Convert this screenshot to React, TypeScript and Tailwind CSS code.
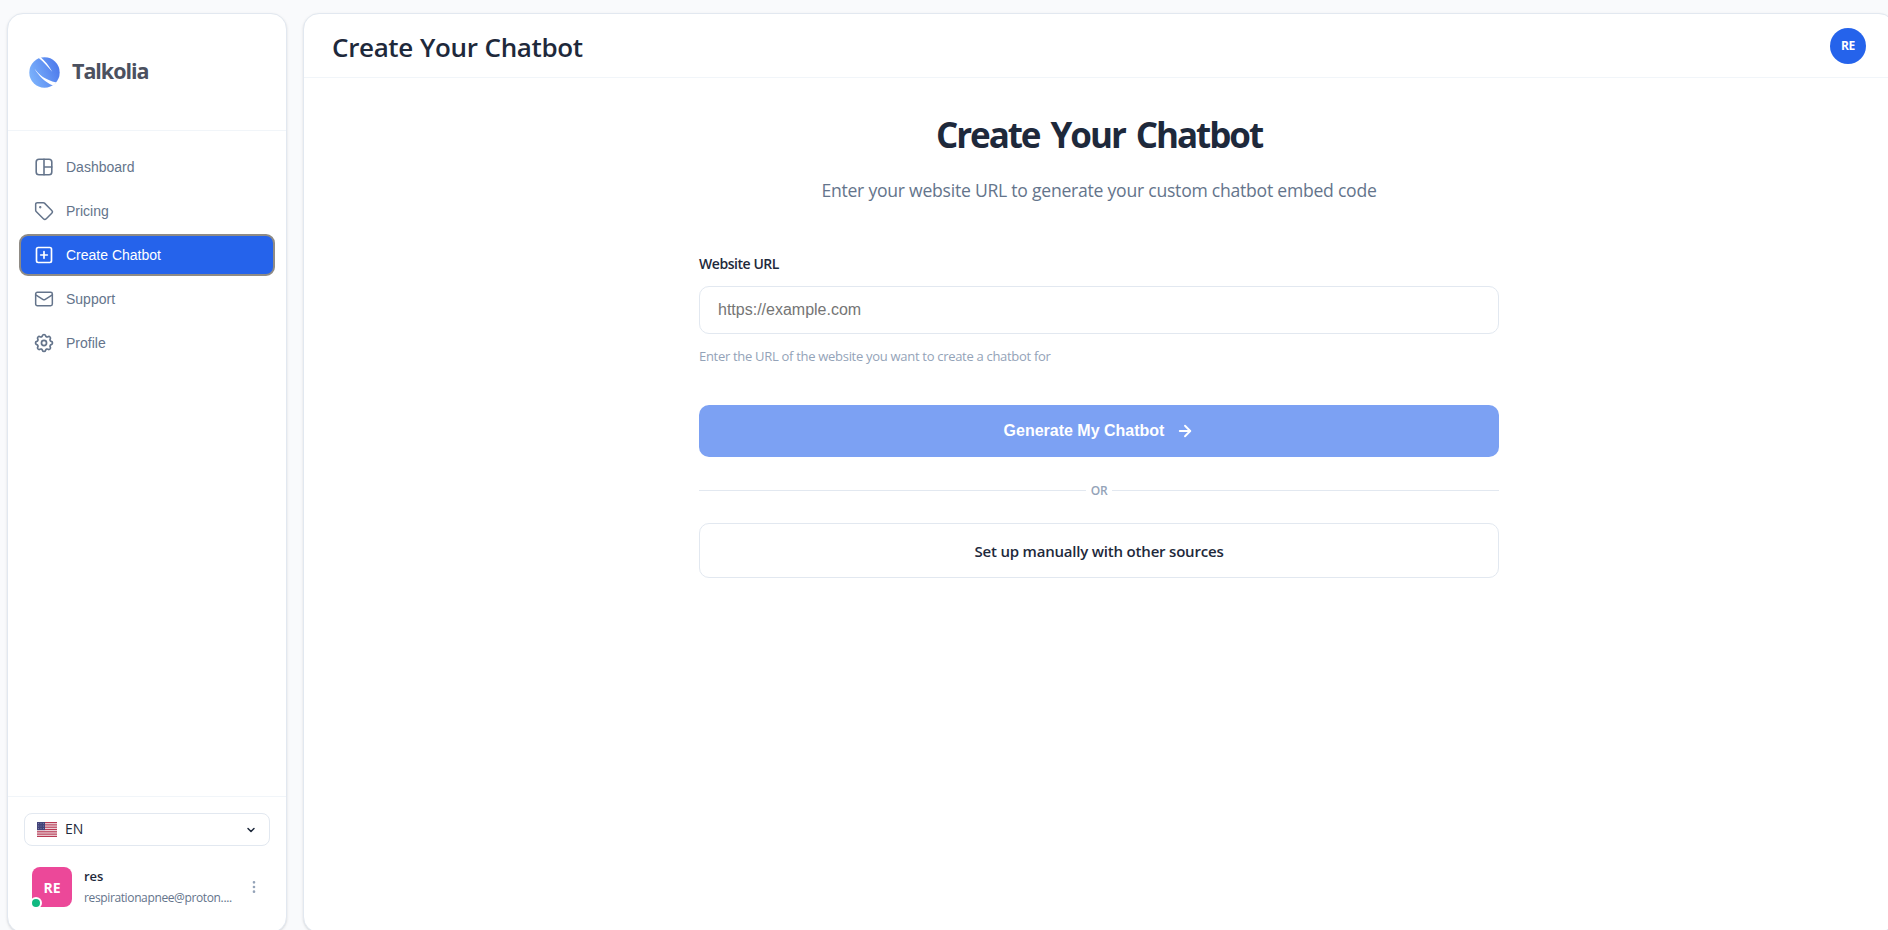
import React from "react";
import { ArrowRight, ChevronDown, EllipsisVertical, Mail, SquarePlus, Tag } from "lucide-react";

const SANS = "font-['Open_Sans','Noto_Sans',sans-serif]";
const ARIAL = "font-['Liberation_Sans',Arial,sans-serif]";

function DashboardIcon() {
  return (
    <svg width="20" height="20" viewBox="0 0 20 20" fill="none" stroke="currentColor" strokeWidth="1.6" strokeLinecap="round" strokeLinejoin="round">
      <rect x="2.2" y="2.2" width="15.6" height="15.6" rx="2.8" />
      <path d="M10 2.2v15.6M10 10h7.8" />
    </svg>
  );
}

function CogIcon() {
  return (
    <svg width="20" height="20" viewBox="1.4 1.4 21.2 21.2" fill="none" stroke="currentColor" strokeWidth="1.8" strokeLinecap="round" strokeLinejoin="round">
      <path d="M10.325 4.317c.426-1.756 2.924-1.756 3.35 0a1.724 1.724 0 002.573 1.066c1.543-.94 3.31.826 2.37 2.37a1.724 1.724 0 001.065 2.572c1.756.426 1.756 2.924 0 3.35a1.724 1.724 0 00-1.066 2.573c.94 1.543-.826 3.31-2.37 2.37a1.724 1.724 0 00-2.572 1.065c-.426 1.756-2.924 1.756-3.35 0a1.724 1.724 0 00-2.573-1.066c-1.543.94-3.31-.826-2.37-2.37a1.724 1.724 0 00-1.065-2.572c-1.756-.426-1.756-2.924 0-3.35a1.724 1.724 0 001.066-2.573c-.94-1.543.826-3.31 2.37-2.37.996.608 2.296.07 2.572-1.065z" />
      <circle cx="12" cy="12" r="2.7" />
    </svg>
  );
}

function Logo() {
  return (
    <svg className="ml-[0.5px]" width="31" height="31" viewBox="0 0 31 31" fill="none">
      <defs>
        <linearGradient id="logo" x1="2" y1="20" x2="29" y2="10" gradientUnits="userSpaceOnUse">
          <stop stopColor="#7ab0fb" />
          <stop offset="1" stopColor="#4f7cec" />
        </linearGradient>
      </defs>
      <circle cx="15.5" cy="15.5" r="15.2" fill="url(#logo)" />
      <path d="M9.8 1 L11.6 0 C16 4 20 8.6 23.2 14.8 C19 9.8 15 5.4 9.8 1Z" fill="white" />
      <path d="M5.4 11.4 C10 17.8 16 22.8 27.4 25.4 L24 28.6 C16 25 10.2 19.4 5.4 11.4Z" fill="white" />
    </svg>
  );
}

function Flag() {
  return (
    <svg width="20" height="15" viewBox="0 0 20 15">
      <rect width="20" height="15" fill="#eedde2" />
      {[0, 1, 2, 3, 4, 5, 6].map((i) => (
        <rect key={i} y={i * 2.308} width="20" height="1.154" fill="#b83a54" />
      ))}
      <rect width="8" height="8.08" fill="#43447a" />
      {[1.5, 4, 6.5].map((x) =>
        [1.5, 4, 6.5].map((y) => <circle key={`${x}-${y}`} cx={x} cy={y} r="0.4" fill="#b9bad2" />)
      )}
    </svg>
  );
}

const items = [
  { label: "Dashboard", icon: <DashboardIcon /> },
  { label: "Pricing", icon: <Tag size={20} strokeWidth={1.8} /> },
  { label: "Create Chatbot", icon: <SquarePlus size={20} strokeWidth={2} />, active: true },
  { label: "Support", icon: <Mail size={20} strokeWidth={1.8} /> },
  { label: "Profile", icon: <CogIcon /> },
];

export default function App() {
  return (
    <div className={`flex h-[930px] w-[1888px] gap-4 overflow-hidden bg-[#f9fafc] pt-[13px] pl-[7px] ${SANS}`}>
      <aside className="flex h-[920px] w-[280px] shrink-0 flex-col rounded-2xl border border-[#e2e8f0] bg-white shadow-sm">
        <div className="flex h-[117px] shrink-0 items-center gap-[12.5px] border-b border-[#f1f5f9] pl-5">
          <Logo />
          <span className="pb-0.5 text-[21.5px] font-bold tracking-[-1.05px] text-[#4b5160]">Talkolia</span>
        </div>
        <nav className={`flex flex-1 flex-col gap-1 px-3 pt-4 text-[14px] ${ARIAL}`}>
          {items.map((it) => (
            <button
              key={it.label}
              className={
                it.active
                  ? "flex h-10 items-center gap-3 rounded-lg bg-[#2563eb] px-3.5 text-white outline-2 -outline-offset-1 outline-[#8f8b85]"
                  : "flex h-10 items-center gap-3 rounded-lg px-3.5 text-[#64748b]"
              }
            >
              {it.icon}
              <span>{it.label}</span>
            </button>
          ))}
        </nav>
        <div className="h-[136px] shrink-0 border-t border-[#f1f5f9] px-4 pt-4">
          <button className="flex h-[33px] w-full items-center rounded-lg border border-[#e2e8f0] px-3">
            <Flag />
            <span className="ml-2 pb-0.5 text-[14px] text-[#1e293b]">EN</span>
            <ChevronDown className="ml-auto text-[#1e293b]" size={12} strokeWidth={3} />
          </button>
          <div className="mt-5 flex items-center px-2">
            <div className="relative flex size-10 items-center justify-center rounded-lg bg-[#ec4899] text-[14px] font-bold text-white">
              RE
              <span className="absolute bottom-0 left-0 size-2 rounded-full bg-[#10b981] ring-2 ring-white" />
            </div>
            <div className="ml-3 flex flex-col gap-0.5">
              <span className="text-[13px] leading-5 font-semibold text-[#1e293b]">res</span>
              <span className="text-[12px] leading-5 tracking-[-0.37px] text-[#64748b]">respirationapnee@proton....</span>
            </div>
            <EllipsisVertical className="ml-auto text-[#94a3b8]" size={16} />
          </div>
        </div>
      </aside>

      <main className="flex h-[920px] w-[1592px] shrink-0 flex-col rounded-2xl border border-[#e2e8f0] bg-white shadow-sm">
        <header className="flex h-16 shrink-0 items-center justify-between border-b border-[#f1f5f9] pr-7 pl-7">
          <h1 className="pt-[3px] text-[26px] font-semibold tracking-[-0.35px] text-[#1e293b] [word-spacing:0.6px]">Create Your Chatbot</h1>
          <div className="flex size-9 items-center justify-center rounded-full bg-[#2563eb] text-[12px] font-bold tracking-[-0.2px] text-white">RE</div>
        </header>
        <section className="mx-auto flex w-[800px] flex-col pt-8">
          <h2 className="text-center text-[35px] leading-[50px] font-bold tracking-[-2.05px] text-[#1e293b] [word-spacing:4px]">Create Your Chatbot</h2>
          <p className="mt-4 text-center text-[17.6px] leading-7 tracking-[-0.25px] text-[#64748b]">Enter your website URL to generate your custom chatbot embed code</p>
          <label className="mt-[50px] text-[14px] leading-5 font-semibold tracking-[-0.45px] text-[#1e293b]">Website URL</label>
          <input
            placeholder="https://example.com"
            className={`mt-3 h-12 rounded-[10px] border border-[#e2e8f0] px-[18px] text-[16px] placeholder:text-[#757575] ${ARIAL}`}
          />
          <p className="mt-3 text-[13px] leading-5 tracking-[-0.3px] text-[#94a3b8]">Enter the URL of the website you want to create a chatbot for</p>
          <button className={`mt-[39px] flex h-[52px] items-center justify-center gap-3 rounded-[10px] bg-[#7ca1f3] text-[16px] font-bold text-white ${ARIAL}`}>
            Generate My Chatbot
            <ArrowRight size={18} strokeWidth={2.5} />
          </button>
          <div className="mt-[23px] flex items-center gap-[5px] text-[12px] leading-5 font-semibold tracking-[-0.4px] text-[#94a3b8]">
            <span className="h-px flex-1 bg-[#e2e8f0]" />
            <span className="-mb-px pt-px leading-5">OR</span>
            <span className="h-px flex-1 bg-[#e2e8f0]" />
          </div>
          <button className="mt-[23px] h-[55px] rounded-[10px] border border-[#e2e8f0] pt-px text-[15px] font-semibold tracking-[-0.2px] text-[#1e293b]">Set up manually with other sources</button>
        </section>
      </main>
    </div>
  );
}
